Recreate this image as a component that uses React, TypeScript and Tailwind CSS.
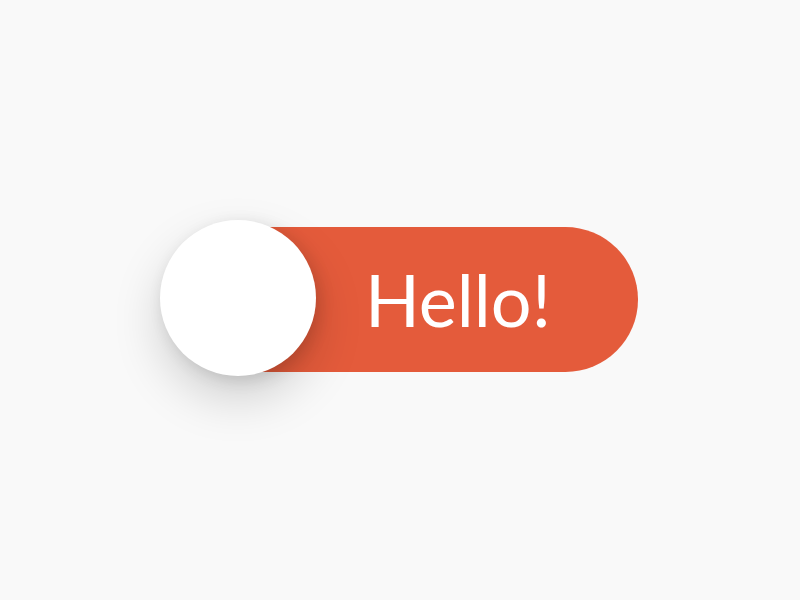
export default function App() {
  return (
    <div className="flex h-[600px] w-full items-center justify-center bg-[#f9f9f9]">
      <div className="relative -ml-[2px] -mt-[4px] flex h-[156px] w-[478px] items-start">
        <div className="ml-[5px] mt-[7px] flex h-[145px] w-[473px] items-center rounded-full bg-[#e45b3b] pl-[200px]">
          <span className="-mt-[2px] font-['Lato',sans-serif] text-[72px] leading-none text-white">Hello!</span>
        </div>
        <div className="absolute left-0 top-0 h-[156px] w-[156px] rounded-full bg-white shadow-[0_22px_48px_rgba(0,0,0,0.17),4px_4px_16px_rgba(0,0,0,0.12)]" />
      </div>
    </div>
  );
}
